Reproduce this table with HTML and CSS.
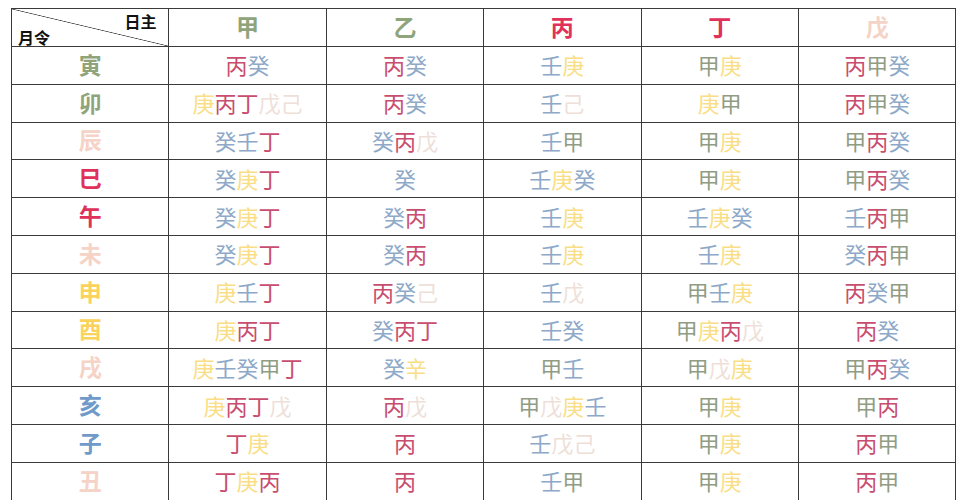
FILE: index.html
```html
<!DOCTYPE html>
<html lang="zh">
<head>
<meta charset="utf-8">
<title>月令日主</title>
<link rel="stylesheet" href="styles.css">
</head>
<body>
<div class="table">
  <div class="cell corner"><span class="ri">日主</span><span class="yl">月令</span></div>
  <div class="cell head w">甲</div>
  <div class="cell head w">乙</div>
  <div class="cell head f">丙</div>
  <div class="cell head f">丁</div>
  <div class="cell head e">戊</div>

  <div class="cell lab w">寅</div>
  <div class="cell"><span class="f">丙</span><span class="a">癸</span></div>
  <div class="cell"><span class="f">丙</span><span class="a">癸</span></div>
  <div class="cell"><span class="a">壬</span><span class="m">庚</span></div>
  <div class="cell"><span class="w">甲</span><span class="m">庚</span></div>
  <div class="cell"><span class="f">丙</span><span class="w">甲</span><span class="a">癸</span></div>

  <div class="cell lab w">卯</div>
  <div class="cell"><span class="m">庚</span><span class="f">丙</span><span class="f">丁</span><span class="e">戊</span><span class="e">己</span></div>
  <div class="cell"><span class="f">丙</span><span class="a">癸</span></div>
  <div class="cell"><span class="a">壬</span><span class="e">己</span></div>
  <div class="cell"><span class="m">庚</span><span class="w">甲</span></div>
  <div class="cell"><span class="f">丙</span><span class="w">甲</span><span class="a">癸</span></div>

  <div class="cell lab e">辰</div>
  <div class="cell"><span class="a">癸</span><span class="a">壬</span><span class="f">丁</span></div>
  <div class="cell"><span class="a">癸</span><span class="f">丙</span><span class="e">戊</span></div>
  <div class="cell"><span class="a">壬</span><span class="w">甲</span></div>
  <div class="cell"><span class="w">甲</span><span class="m">庚</span></div>
  <div class="cell"><span class="w">甲</span><span class="f">丙</span><span class="a">癸</span></div>

  <div class="cell lab f">巳</div>
  <div class="cell"><span class="a">癸</span><span class="m">庚</span><span class="f">丁</span></div>
  <div class="cell"><span class="a">癸</span></div>
  <div class="cell"><span class="a">壬</span><span class="m">庚</span><span class="a">癸</span></div>
  <div class="cell"><span class="w">甲</span><span class="m">庚</span></div>
  <div class="cell"><span class="w">甲</span><span class="f">丙</span><span class="a">癸</span></div>

  <div class="cell lab f">午</div>
  <div class="cell"><span class="a">癸</span><span class="m">庚</span><span class="f">丁</span></div>
  <div class="cell"><span class="a">癸</span><span class="f">丙</span></div>
  <div class="cell"><span class="a">壬</span><span class="m">庚</span></div>
  <div class="cell"><span class="a">壬</span><span class="m">庚</span><span class="a">癸</span></div>
  <div class="cell"><span class="a">壬</span><span class="f">丙</span><span class="w">甲</span></div>

  <div class="cell lab e">未</div>
  <div class="cell"><span class="a">癸</span><span class="m">庚</span><span class="f">丁</span></div>
  <div class="cell"><span class="a">癸</span><span class="f">丙</span></div>
  <div class="cell"><span class="a">壬</span><span class="m">庚</span></div>
  <div class="cell"><span class="a">壬</span><span class="m">庚</span></div>
  <div class="cell"><span class="a">癸</span><span class="f">丙</span><span class="w">甲</span></div>

  <div class="cell lab m">申</div>
  <div class="cell"><span class="m">庚</span><span class="a">壬</span><span class="f">丁</span></div>
  <div class="cell"><span class="f">丙</span><span class="a">癸</span><span class="e">己</span></div>
  <div class="cell"><span class="a">壬</span><span class="e">戊</span></div>
  <div class="cell"><span class="w">甲</span><span class="a">壬</span><span class="m">庚</span></div>
  <div class="cell"><span class="f">丙</span><span class="a">癸</span><span class="w">甲</span></div>

  <div class="cell lab m">酉</div>
  <div class="cell"><span class="m">庚</span><span class="f">丙</span><span class="f">丁</span></div>
  <div class="cell"><span class="a">癸</span><span class="f">丙</span><span class="f">丁</span></div>
  <div class="cell"><span class="a">壬</span><span class="a">癸</span></div>
  <div class="cell"><span class="w">甲</span><span class="m">庚</span><span class="f">丙</span><span class="e">戊</span></div>
  <div class="cell"><span class="f">丙</span><span class="a">癸</span></div>

  <div class="cell lab e">戌</div>
  <div class="cell"><span class="m">庚</span><span class="a">壬</span><span class="a">癸</span><span class="w">甲</span><span class="f">丁</span></div>
  <div class="cell"><span class="a">癸</span><span class="m">辛</span></div>
  <div class="cell"><span class="w">甲</span><span class="a">壬</span></div>
  <div class="cell"><span class="w">甲</span><span class="e">戊</span><span class="m">庚</span></div>
  <div class="cell"><span class="w">甲</span><span class="f">丙</span><span class="a">癸</span></div>

  <div class="cell lab a">亥</div>
  <div class="cell"><span class="m">庚</span><span class="f">丙</span><span class="f">丁</span><span class="e">戊</span></div>
  <div class="cell"><span class="f">丙</span><span class="e">戊</span></div>
  <div class="cell"><span class="w">甲</span><span class="e">戊</span><span class="m">庚</span><span class="a">壬</span></div>
  <div class="cell"><span class="w">甲</span><span class="m">庚</span></div>
  <div class="cell"><span class="w">甲</span><span class="f">丙</span></div>

  <div class="cell lab a">子</div>
  <div class="cell"><span class="f">丁</span><span class="m">庚</span></div>
  <div class="cell"><span class="f">丙</span></div>
  <div class="cell"><span class="a">壬</span><span class="e">戊</span><span class="e">己</span></div>
  <div class="cell"><span class="w">甲</span><span class="m">庚</span></div>
  <div class="cell"><span class="f">丙</span><span class="w">甲</span></div>

  <div class="cell lab e">丑</div>
  <div class="cell"><span class="f">丁</span><span class="m">庚</span><span class="f">丙</span></div>
  <div class="cell"><span class="f">丙</span></div>
  <div class="cell"><span class="a">壬</span><span class="w">甲</span></div>
  <div class="cell"><span class="w">甲</span><span class="m">庚</span></div>
  <div class="cell"><span class="f">丙</span><span class="w">甲</span></div>
</div>
</body>
</html>
```

FILE: styles.css
```css
html, body {
  margin: 0;
  padding: 0;
  background: #ffffff;
}

body {
  padding: 8px 0 0 11px;
  font-family: "Noto Sans CJK TC", "Noto Sans CJK SC", "Noto Sans", sans-serif;
  overflow: hidden;
  height: 500px;
  box-sizing: border-box;
}

.table {
  display: grid;
  grid-template-columns: repeat(6, 157.4px);
  grid-template-rows: 38px;
  grid-auto-rows: 37.8px;
  border-top: 1px solid #3a3a3a;
  border-left: 1px solid #3a3a3a;
  width: max-content;
}

.cell {
  display: flex;
  align-items: center;
  justify-content: center;
  border-right: 1px solid #3a3a3a;
  border-bottom: 1px solid #3a3a3a;
  font-size: 22px;
  line-height: 1;
  padding-bottom: 2px;
  box-sizing: border-box;
}

.head {
  font-size: 23px;
  font-weight: 700;
  padding-bottom: 3px;
}

.lab {
  font-size: 23px;
  font-weight: 700;
}

.corner {
  position: relative;
  background: linear-gradient(to top right, transparent calc(50% - 0.7px), #444 50%, transparent calc(50% + 0.7px));
  font-size: 16px;
  font-weight: 700;
  color: #111;
  padding: 0;
}

.corner .ri {
  position: absolute;
  right: 12px;
  top: 4px;
}

.corner .yl {
  position: absolute;
  left: 6px;
  bottom: 1px;
}

/* body element colours */
.w { color: #909d84; }
.f { color: #c94d6e; }
.e { color: #efdfd9; }
.m { color: #f9de86; }
.a { color: #8ea9c8; }

/* header & month label colours */
.head.w, .lab.w { color: #8fa47b; }
.head.f, .lab.f { color: #df3159; }
.head.e, .lab.e { color: #f5d3c6; }
.lab.m { color: #fbd35b; }
.lab.a { color: #6f9ac9; }
```
